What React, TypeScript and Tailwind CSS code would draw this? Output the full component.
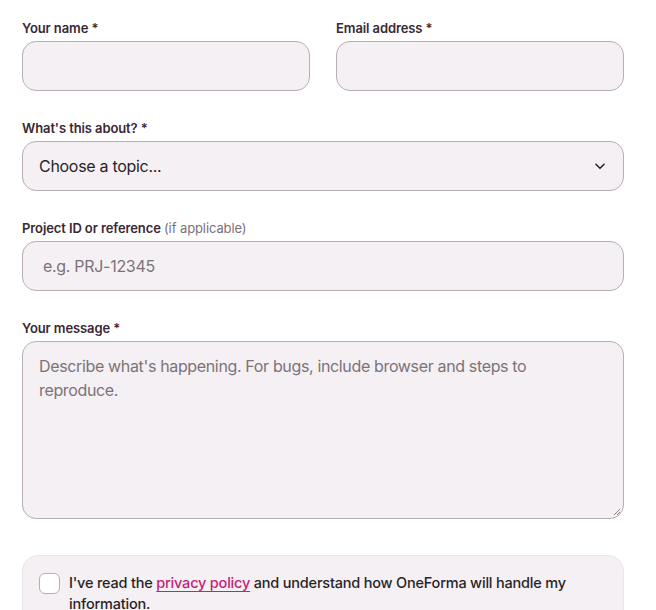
import React from "react";

const label = "block text-[13px] leading-[18px] font-semibold text-[#3a2834] mb-[4px] tracking-[-0.1px]";
const field =
  "w-full h-[50px] rounded-[14px] border border-[#b9aeb5] bg-[#f4f0f3] text-[16px] text-[#2a1f27] outline-none";

export default function App() {
  return (
    <div
      className="w-[656px] h-[610px] overflow-hidden bg-white pl-[22px] pr-[32px] pt-[19px]"
      style={{ fontFamily: "Inter, 'Noto Sans', sans-serif" }}
    >
      <div className="grid grid-cols-2 gap-[26px]">
        <div>
          <label className={label}>Your name *</label>
          <input className={field + " px-4"} />
        </div>
        <div>
          <label className={label}>Email address *</label>
          <input className={field + " px-4"} />
        </div>
      </div>

      <div className="mt-[28px]">
        <label className={label}>What's this about? *</label>
        <div className={field + " flex items-center justify-between pl-4 pr-[16px]"}>
          <span className="tracking-[-0.3px]">Choose a topic...</span>
          <svg width="14" height="14" viewBox="0 0 24 24" fill="none" stroke="#2a1f27" strokeWidth="2.6" strokeLinecap="round" strokeLinejoin="round">
            <path d="M5 9l7 7 7-7" />
          </svg>
        </div>
      </div>

      <div className="mt-[28px]">
        <label className={label}>
          Project ID or reference <span className="font-normal text-[#7c7079]">(if applicable)</span>
        </label>
        <div className={field + " flex items-center pl-5"}>
          <span className="text-[#7c7379] tracking-[-0.3px]">e.g. PRJ-12345</span>
        </div>
      </div>

      <div className="mt-[28px]">
        <label className={label}>Your message *</label>
        <div className="relative w-full h-[178px] rounded-[14px] border border-[#b9aeb5] bg-[#f4f0f3] px-4 pt-[12px] text-[16px] leading-[24px] text-[#7c7379] tracking-[-0.35px]">
          Describe what's happening. For bugs, include browser and steps to reproduce.
          <svg className="absolute right-[2px] bottom-[2px]" width="8" height="8" viewBox="0 0 8 8" stroke="#8a8088" strokeWidth="1">
            <path d="M1 7L7 1M4 7L7 4" />
          </svg>
        </div>
      </div>

      <div className="mt-[36px] rounded-[16px] border border-[#ebe5e9] bg-[#f4f0f3] pl-[16px] pr-6 pt-[16px] pb-4 flex gap-[9px]">
        <div className="mt-[1px] w-[21px] h-[21px] shrink-0 rounded-[6px] border border-[#b9aeb5] bg-white" />
        <p className="text-[14.5px] leading-[21px] font-medium text-[#2a1f27] tracking-[-0.2px]">
          I've read the{" "}
          <span className="text-[#c42379] underline decoration-[#c42379] underline-offset-[3px]">privacy policy</span>{" "}
          and understand how OneForma will handle my information.
        </p>
      </div>
    </div>
  );
}
